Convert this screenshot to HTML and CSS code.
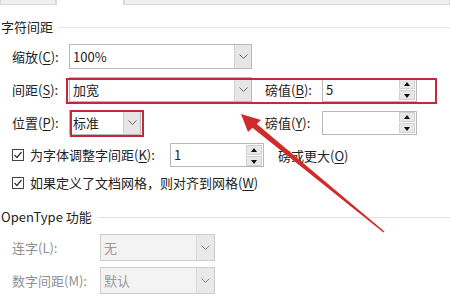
FILE: index.html
```html
<!DOCTYPE html>
<html lang="zh-CN">
<head>
<meta charset="utf-8">
<link rel="stylesheet" href="styles.css">
</head>
<body>
<div class="page">
  <div class="tabs">
    <div class="tab t1"></div>
    <div class="tab active"></div>
    <div class="tab rest"></div>
  </div>

  <div class="group-title first"><span>字符间距</span><i class="rule"></i></div>

  <div class="row">
    <span class="lbl">缩放(<u>C</u>):</span>
    <div class="select wide"><span class="val">100%</span><b class="dd"><svg width="9" height="5" viewBox="0 0 9 5"><path d="M0.5 0.5 L4.5 4.5 L8.5 0.5" fill="none" stroke="#666" stroke-width="1"/></svg></b></div>
  </div>

  <div class="row">
    <span class="lbl">间距(<u>S</u>):</span>
    <div class="select wide"><span class="val">加宽</span><b class="dd"><svg width="9" height="5" viewBox="0 0 9 5"><path d="M0.5 0.5 L4.5 4.5 L8.5 0.5" fill="none" stroke="#666" stroke-width="1"/></svg></b></div>
    <span class="lbl">磅值(<u>B</u>):</span>
    <div class="spin"><span class="val">5</span><span class="btns"><b class="up"></b><b class="down"></b></span></div>
    <div class="hl hl-wide"></div>
  </div>

  <div class="row">
    <span class="lbl">位置(<u>P</u>):</span>
    <div class="select small"><span class="val">标准</span><b class="dd"><svg width="9" height="5" viewBox="0 0 9 5"><path d="M0.5 0.5 L4.5 4.5 L8.5 0.5" fill="none" stroke="#666" stroke-width="1"/></svg></b></div>
    <span class="lbl">磅值(<u>Y</u>):</span>
    <div class="spin"><span class="val"></span><span class="btns"><b class="up"></b><b class="down"></b></span></div>
    <div class="hl hl-small"></div>
  </div>

  <div class="check-row kern">
    <span class="cb"><svg width="10" height="10" viewBox="0 0 10 10"><path d="M1.5 5 L4 7.5 L8.5 2" fill="none" stroke="#333" stroke-width="1.2"/></svg></span>
    <span class="cb-text">为字体调整字间距(<u>K</u>):</span>
    <div class="spin kspin"><span class="val">1</span><span class="btns"><b class="up"></b><b class="down"></b></span></div>
    <span class="after">磅或更大(<u>O</u>)</span>
  </div>

  <div class="check-row grid-row">
    <span class="cb"><svg width="10" height="10" viewBox="0 0 10 10"><path d="M1.5 5 L4 7.5 L8.5 2" fill="none" stroke="#333" stroke-width="1.2"/></svg></span>
    <span class="cb-text">如果定义了文档网格，则对齐到网格(<u>W</u>)</span>
  </div>

  <div class="group-title second"><span>OpenType 功能</span><i class="rule"></i></div>

  <div class="drow">
    <span class="lbl dis">连字(L):</span>
    <div class="select disabled"><span class="val">无</span><b class="dd"><svg width="9" height="5" viewBox="0 0 9 5"><path d="M0.5 0.5 L4.5 4.5 L8.5 0.5" fill="none" stroke="#888" stroke-width="1"/></svg></b></div>
  </div>
  <div class="drow">
    <span class="lbl dis">数字间距(M):</span>
    <div class="select disabled"><span class="val">默认</span><b class="dd"><svg width="9" height="5" viewBox="0 0 9 5"><path d="M0.5 0.5 L4.5 4.5 L8.5 0.5" fill="none" stroke="#888" stroke-width="1"/></svg></b></div>
  </div>

  <svg class="arrow" width="450" height="300" viewBox="0 0 450 300">
    <polygon points="384.5,231.5 383.5,232.5 251.5,127 255,122.5" fill="#cf2b2b"/>
    <polygon points="241,114 261,120 248,132" fill="#cf2b2b"/>
  </svg>
</div>
</body>
</html>
```

FILE: styles.css
```css
* { box-sizing: border-box; }
html, body { margin: 0; padding: 0; background: #fff; }
body {
  font-family: "Noto Sans CJK SC", "Microsoft YaHei", sans-serif;
  font-size: 13px;
  color: #222;
  width: 450px;
  height: 300px;
  overflow: hidden;
}
.page { position: relative; width: 450px; height: 300px; }
u { text-decoration: underline; text-underline-offset: 2px; text-decoration-thickness: 1px; }

.tabs { display: flex; height: 5px; }
.tab { background: #f0f0f0; border: 1px solid #d9d9d9; border-top: none; }
.t1 { width: 56px; }
.tab.active { width: 68px; background: #fff; border-bottom: none; border-left: 1px solid #d9d9d9; border-right: 1px solid #d9d9d9; }
.rest { flex: 1; }

.group-title { display: flex; align-items: center; height: 16px; line-height: 16px; padding-left: 1px; }
.group-title .rule { flex: 1; border-top: 1px solid #e3e3e3; margin-left: 6px; margin-top: 1px; }
.group-title.first { margin-top: 14px; }
.group-title.second { margin-top: 14px; }

.row {
  position: relative;
  display: grid;
  grid-template-columns: 57px 196px 57px 95px;
  align-items: center;
  padding-left: 12px;
  height: 25px;
}
.row + .row { margin-top: 8px; }
.group-title.first + .row { margin-top: 9px; }

.lbl { white-space: nowrap; line-height: 16px; }
.lbl.dis { color: #8f8f8f; }

.select {
  display: flex;
  align-items: stretch;
  height: 25px;
  border: 1px solid #b9b9b9;
  background: #fff;
}
.select.wide { width: 183px; }
.select.small { width: 72px; }
.select .val { flex: 1; padding-left: 3px; line-height: 23px; }
.select .dd {
  width: 17px;
  background: #e6e6e6;
  border-left: 1px solid #d2d2d2;
  display: flex;
  align-items: center;
  justify-content: center;
}

.spin {
  display: flex;
  align-items: center;
  height: 24px;
  border: 1px solid #b9b9b9;
  background: #fff;
  width: 95px;
}
.spin .val { flex: 1; padding-left: 3px; line-height: 22px; }
.spin .btns { display: flex; flex-direction: column; gap: 1px; width: 16px; margin-right: 1px; }
.spin .btns b {
  height: 10px;
  background: #e8e8e8;
  border: 1px solid #d0d0d0;
  position: relative;
}
.spin .btns b::after {
  content: "";
  position: absolute;
  left: 4px;
  width: 0; height: 0;
  border-left: 3.5px solid transparent;
  border-right: 3.5px solid transparent;
}
.spin .btns .up::after { top: 2px; border-bottom: 4px solid #111; }
.spin .btns .down::after { top: 3px; border-top: 4px solid #111; }

.hl { position: absolute; border: 2px solid #c5283b; pointer-events: none; }
.hl-wide { left: 66px; top: 1px; width: 371px; height: 26px; }
.hl-small { left: 70px; top: 0; width: 74px; height: 27px; }

.check-row { display: flex; align-items: center; padding-left: 12px; }
.check-row.kern { margin-top: 8px; height: 24px; }
.check-row.grid-row { margin-top: 4px; height: 24px; }
.cb {
  width: 12px; height: 12px;
  border: 1px solid #444;
  display: flex; align-items: center; justify-content: center;
  margin-right: 6px;
  background: #fff;
}
.cb-text { white-space: nowrap; line-height: 16px; }
.kern .cb-text { width: 140px; }
.kspin { width: 94px; height: 24px; }
.after { margin-left: 14px; white-space: nowrap; }

.drow {
  display: grid;
  grid-template-columns: 88px 115px;
  align-items: center;
  padding-left: 12px;
  height: 27px;
}
.group-title.second + .drow { margin-top: 9px; }
.drow + .drow { margin-top: 6px; }
.select.disabled { width: 115px; height: 27px; background: #f3f3f3; border-color: #cdcdcd; color: #9a9a9a; }
.select.disabled .val { line-height: 25px; }
.select.disabled .dd { background: #e9e9e9; border-left-color: #d9d9d9; width: 18px; }

.arrow { position: absolute; left: 0; top: 0; pointer-events: none; }
```
